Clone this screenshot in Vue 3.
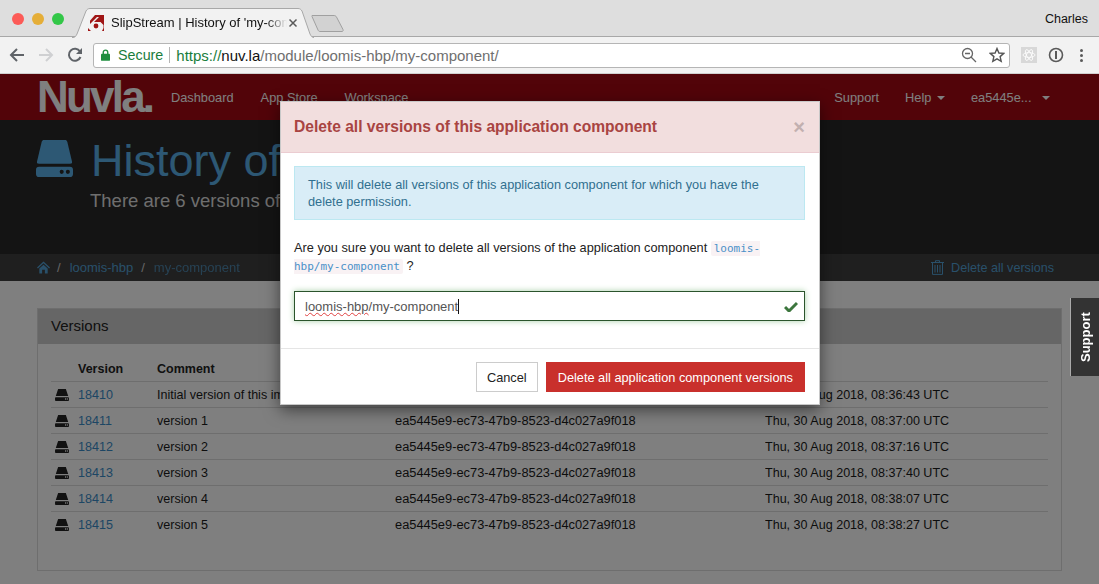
<template>
  <div class="browser">
    <div class="tabstrip">
      <div class="lights">
        <span class="light red"></span>
        <span class="light yellow"></span>
        <span class="light green"></span>
      </div>
      <div class="tab">
        <svg class="tab-shape" width="242" height="30" viewBox="0 0 242 30">
          <path d="M0 29.500 H1 C3 29.500 4 28 5 26 L14 3 C15 1.500 16 .5 18 .5 H226 C228 .5 229 1.500 230 3 L238 26 C239 28 240 29.500 242 29.500" fill="#f2f2f2" stroke="#a8a8a8" />
        </svg>
        <svg class="favicon" width="16" height="16" viewBox="0 0 16 16">
          <path d="M7 0 H16 V16 H14 L15.500 13 V10 L12.500 7 H6 L11 2 H9 L2 9 V0 Z M0 13 L3 16 H0 Z" fill="#a01616" />
          <path d="M0 0 H7 L0 8 Z" fill="#f2f2f2" />
          <circle cx="8" cy="11" r="2.400" fill="#a01616" />
        </svg>
        <span class="tab-title">SlipStream | History of 'my-component'</span>
        <svg class="tab-close" width="10" height="10" viewBox="0 0 10 10">
          <path d="M1.500 1.500 L8.500 8.500 M8.500 1.500 L1.500 8.500" stroke="#5a5a5a" stroke-width="1.500" />
        </svg>
      </div>
      <svg class="new-tab" width="33" height="17" viewBox="0 0 33 17">
        <path d="M1 .5 H23 C24 .5 25 1 25.500 2 L32 14.500 C32.500 15.500 32 16.500 31 16.500 H9 C8 16.500 7.500 16 7 15 L1 1.500 Z" fill="#d2d2d2" stroke="#a0a0a0" />
      </svg>
      <span class="profile">Charles</span>
    </div>

    <div class="toolbar">
      <svg class="nav-btn" width="16" height="16" viewBox="0 0 16 16">
        <path d="M15 8 H2.500 M8 2 L2 8 L8 14" fill="none" stroke="#5f6368" stroke-width="2" />
      </svg>
      <svg class="nav-btn" width="16" height="16" viewBox="0 0 16 16">
        <path d="M1 8 H13.500 M8 2 L14 8 L8 14" fill="none" stroke="#cfd0d2" stroke-width="2" />
      </svg>
      <svg class="nav-btn" width="16" height="16" viewBox="0 0 16 16">
        <path d="M13.500 10 A6 6 0 1 1 13 4.500" fill="none" stroke="#5f6368" stroke-width="2" />
        <path d="M15 1 V7 H9 Z" fill="#5f6368" />
      </svg>
      <div class="omnibox">
        <svg width="9" height="12" viewBox="0 0 10 13">
          <rect y="5" width="10" height="8" rx="1" fill="#1e8e3e" />
          <path d="M2.500 6 V3.500 A2.500 2.500 0 0 1 7.500 3.500 V6" fill="none" stroke="#1e8e3e" stroke-width="1.500" />
        </svg>
        <span class="secure">Secure</span>
        <span class="omni-sep"></span>
        <span class="url"><span class="scheme">https://</span><span class="host">nuv.la</span>/module/loomis-hbp/my-component/</span>
        <span class="omni-icons">
          <svg width="16" height="16" viewBox="0 0 16 16">
            <circle cx="6.500" cy="6.500" r="5" fill="none" stroke="#666" stroke-width="1.300" />
            <path d="M4 6.500 H9 M10 10 L15 15" stroke="#666" stroke-width="1.300" />
          </svg>
          <svg width="16" height="16" viewBox="0 0 16 16">
            <path d="M8 1.500 L9.900 6 L14.800 6.400 L11.100 9.600 L12.200 14.400 L8 11.900 L3.800 14.400 L4.900 9.600 L1.200 6.400 L6.100 6 Z" fill="none" stroke="#555" stroke-width="1.400" />
          </svg>
        </span>
      </div>
      <div class="ext-box">
        <svg width="14" height="14" viewBox="0 0 14 14">
          <g fill="none" stroke="#fff" stroke-width=".8">
            <ellipse cx="7" cy="7" rx="6" ry="2.400" />
            <ellipse cx="7" cy="7" rx="6" ry="2.400" transform="rotate(60 7 7)" />
            <ellipse cx="7" cy="7" rx="6" ry="2.400" transform="rotate(120 7 7)" />
          </g>
        </svg>
      </div>
      <svg class="onepass" width="16" height="16" viewBox="0 0 16 16">
        <circle cx="8" cy="8" r="6.500" fill="none" stroke="#5a5a5a" stroke-width="1.600" />
        <rect x="7" y="4" width="2" height="8" fill="#5a5a5a" />
      </svg>
      <div class="kebab"><span></span><span></span><span></span></div>
    </div>

    <div class="page">
      <nav class="navbar">
        <span class="logo">Nuvla.</span>
        <a class="nav-link">Dashboard</a>
        <a class="nav-link">App Store</a>
        <a class="nav-link">Workspace</a>
        <span class="nav-spacer"></span>
        <a class="nav-link right">Support</a>
        <a class="nav-link right">Help <i class="caret"></i></a>
        <a class="nav-link right user">ea5445e... <i class="caret"></i></a>
      </nav>

      <header class="hero">
        <svg class="hero-icon" width="37" height="37" viewBox="0 0 36 36">
          <path d="M8 0 H28 C29.500 0 30 .5 30.500 2 L35 21 C35.300 23 35 23 33 23 H3 C1 23 .7 23 1 21 L5.500 2 C6 .5 6.500 0 8 0 Z" fill="currentColor" />
          <path fill-rule="evenodd" d="M3 26 H33 C35 26 36 27 36 29 V33 C36 35 35 36 33 36 H3 C1 36 0 35 0 33 V29 C0 27 1 26 3 26 Z M25 29 A2 2 0 1 0 25 33 A2 2 0 1 0 25 29 Z M31 29 A2 2 0 1 0 31 33 A2 2 0 1 0 31 29 Z" fill="currentColor" />
        </svg>
        <div>
          <h1>History of 'my-component'</h1>
          <p>There are 6 versions of this component.</p>
        </div>
      </header>

      <div class="crumbs">
        <svg class="home" width="13" height="13" viewBox="0 0 14 13">
          <path d="M7 0 L14 6.500 L13 7.500 L7 2 L1 7.500 L0 6.500 Z M2.500 7.500 L7 3.500 L11.500 7.500 V13 H8.500 V9 H5.500 V13 H2.500 Z" fill="currentColor" />
        </svg>
        <span class="slash">/</span>
        <a>loomis-hbp</a>
        <span class="slash">/</span>
        <span class="crumb-active">my-component</span>
        <span class="nav-spacer"></span>
        <svg class="trash" width="13" height="15" viewBox="0 0 13 15">
          <path d="M4.500 2 V.7 H8.500 V2 M0 2.500 H13 M1.500 3 V14.400 H11.500 V3 M4 5 V12.500 M6.500 5 V12.500 M9 5 V12.500" fill="none" stroke="currentColor" />
        </svg>
        <a class="delete-all">Delete all versions</a>
      </div>

      <main class="content">
        <section class="panel">
          <div class="panel-head">Versions</div>
          <div class="panel-body">
            <table>
              <thead>
                <tr>
                  <th class="col-icon"></th>
                  <th class="col-version">Version</th>
                  <th class="col-comment">Comment</th>
                  <th class="col-owner">Owner</th>
                  <th>Date</th>
                </tr>
              </thead>
              <tbody>
                <tr v-for="row in versions" :key="row.id">
                  <td>
                    <svg class="row-icon" width="14" height="12" viewBox="0 0 36 31">
                      <path d="M8 0 H28 L34 18 H2 Z" fill="currentColor" />
                      <path fill-rule="evenodd" d="M2 21 H34 C35 21 36 22 36 23 V29 C36 30 35 31 34 31 H2 C1 31 0 30 0 29 V23 C0 22 1 21 2 21 Z M26 24 V28 H29 V24 Z M31 24 V28 H33 V24 Z" fill="currentColor" />
                    </svg>
                  </td>
                  <td><a>{{ row.id }}</a></td>
                  <td>{{ row.comment }}</td>
                  <td class="owner">{{ owner }}</td>
                  <td>{{ row.date }}</td>
                </tr>
              </tbody>
            </table>
          </div>
        </section>
      </main>

      <div class="backdrop"></div>
      <div class="support-tab">Support</div>

      <div class="modal">
        <div class="modal-head">
          <span>Delete all versions of this application component</span>
          <span class="modal-close">×</span>
        </div>
        <div class="modal-body">
          <div class="alert">This will delete all versions of this application component for which you have the delete permission.</div>
          <p class="question">Are you sure you want to delete all versions of the application component <code>loomis-hbp/my-component</code> ?</p>
          <div class="fake-input">
            <span class="typed"><span class="misspelt">loomis-hbp</span>/my-component</span>
            <svg width="14" height="11" viewBox="0 0 14 11">
              <path d="M1 6 L5 10 L13 2" fill="none" stroke="#3c763d" stroke-width="3" />
            </svg>
          </div>
        </div>
        <div class="modal-foot">
          <button class="btn">Cancel</button>
          <button class="btn danger">Delete all application component versions</button>
        </div>
      </div>
    </div>
  </div>
</template>

<script setup>
const owner = 'ea5445e9-ec73-47b9-8523-d4c027a9f018'

const versions = [
  { id: 18410, comment: 'Initial version of this image', date: 'Thu, 30 Aug 2018, 08:36:43 UTC' },
  { id: 18411, comment: 'version 1', date: 'Thu, 30 Aug 2018, 08:37:00 UTC' },
  { id: 18412, comment: 'version 2', date: 'Thu, 30 Aug 2018, 08:37:16 UTC' },
  { id: 18413, comment: 'version 3', date: 'Thu, 30 Aug 2018, 08:37:40 UTC' },
  { id: 18414, comment: 'version 4', date: 'Thu, 30 Aug 2018, 08:38:07 UTC' },
  { id: 18415, comment: 'version 5', date: 'Thu, 30 Aug 2018, 08:38:27 UTC' }
]
</script>

<style>
html, body {
  margin: 0;
  overflow: hidden;
}
</style>

<style scoped>
.browser {
  width: 1099px;
  height: 584px;
  overflow: hidden;
  font-family: "Liberation Sans", Arial, sans-serif;
  font-size: 13px;
  color: #1a1a1a;
  background: #fff;
}

.tabstrip {
  height: 37px;
  box-sizing: border-box;
  background: #dedede;
  border-bottom: 1px solid #a8a8a8;
  display: flex;
  align-items: flex-end;
  position: relative;
}

.lights {
  display: flex;
  gap: 8px;
  padding: 0 0 11px 12px;
}

.light {
  width: 12px;
  height: 12px;
  border-radius: 50%;
}
.light.red { background: #fc5b57; }
.light.yellow { background: #e5ae38; }
.light.green { background: #33c748; }

.tab {
  position: relative;
  width: 242px;
  height: 29px;
  margin-left: 8px;
  margin-bottom: -1px;
  display: flex;
  align-items: center;
  box-sizing: border-box;
  padding: 0 0 0 16px;
  font-size: 13px;
}

.tab-shape {
  position: absolute;
  left: 0;
  top: 0;
}

.favicon, .tab-title, .tab-close {
  position: relative;
}

.tab-title {
  width: 176px;
  margin-left: 7px;
  white-space: nowrap;
  overflow: hidden;
  color: #111;
  -webkit-mask-image: linear-gradient(to right, #000 88%, transparent 100%);
  mask-image: linear-gradient(to right, #000 88%, transparent 100%);
}

.tab-close {
  margin-left: 1px;
}

.new-tab {
  margin: 0 0 4px -3px;
}

.profile {
  position: absolute;
  right: 11px;
  top: 12px;
  font-size: 12.500px;
  color: #111;
}

.toolbar {
  height: 37px;
  box-sizing: border-box;
  background: #f2f2f2;
  border-bottom: 1px solid #d0d0d0;
  display: flex;
  align-items: center;
  padding: 0 0 0 9px;
}

.nav-btn {
  margin-right: 13px;
}

.omnibox {
  width: 917px;
  height: 25px;
  box-sizing: border-box;
  margin-left: -3px;
  background: #fff;
  border: 1px solid #b5b5b5;
  border-radius: 3px;
  display: flex;
  align-items: center;
  padding: 0 4px 0 7px;
  font-size: 15px;
  color: #6f6f6f;
}

.secure {
  color: #1a7d3c;
  font-size: 14.300px;
  margin-left: 8px;
}

.omni-sep {
  width: 1px;
  height: 16px;
  background: #b5b5b5;
  margin: 0 6px;
}

.scheme { color: #1a7d3c; }
.host { color: #111; }

.omni-icons {
  margin-left: auto;
  display: flex;
  gap: 12px;
}

.ext-box {
  width: 16px;
  height: 16px;
  margin-left: 11px;
  background: #d8d8d8;
  display: flex;
  align-items: center;
  justify-content: center;
}

.onepass {
  margin-left: 11px;
}

.kebab {
  margin-left: 16px;
  display: flex;
  flex-direction: column;
  gap: 2px;
}

.kebab span {
  width: 3px;
  height: 3px;
  border-radius: 50%;
  background: #5a5a5a;
}

.page {
  position: relative;
  height: 510px;
  overflow: hidden;
  background: #fff;
}

.navbar {
  height: 46px;
  box-sizing: border-box;
  background: #a40812;
  display: flex;
  align-items: center;
  padding: 0 49px 0 37px;
  color: #fff;
}

.logo {
  width: 134px;
  font-size: 44px;
  font-weight: 700;
  letter-spacing: -2.800px;
  line-height: 46px;
  color: #fff;
}

.nav-link {
  margin-right: 27px;
  font-size: 12.800px;
}

.nav-link.right {
  margin-right: 26px;
}

.nav-link.right:last-child {
  margin-right: 0;
}

.nav-spacer {
  flex: 1;
}

.caret {
  display: inline-block;
  margin-left: 2px;
  vertical-align: middle;
  border-top: 4px solid currentColor;
  border-left: 4px solid transparent;
  border-right: 4px solid transparent;
}

.user .caret {
  margin-left: 7px;
}

.hero {
  height: 134px;
  box-sizing: border-box;
  background: #282828;
  display: flex;
  padding: 20px 0 0 36px;
  color: #5ab0e8;
}

.hero-icon {
  margin: 0 18px 0 0;
}

.hero h1 {
  margin: -3px 0 0;
  font-size: 45px;
  font-weight: 400;
  line-height: 48px;
  white-space: nowrap;
}

.hero p {
  margin: 4px 0 0 -1px;
  font-size: 18.500px;
  line-height: 24px;
  color: #ddd;
}

.crumbs {
  height: 27px;
  box-sizing: border-box;
  background: #3e3e3e;
  display: flex;
  align-items: center;
  padding: 0 45px 0 37px;
  color: #52a0d4;
  font-size: 13px;
}

.slash {
  margin: 0 9px 0 8px;
  color: #ccc;
}

.home {
  margin-right: -1px;
}

.crumb-active {
  opacity: .7;
}

.delete-all {
  font-size: 12.600px;
}

.trash {
  margin-right: 7px;
}

.content {
  padding: 27px 37px 0;
}

.panel {
  height: 263px;
  box-sizing: border-box;
  border: 1px solid #ddd;
}

.panel-head {
  height: 35px;
  box-sizing: border-box;
  padding: 0 13px;
  background: #ccc;
  font-size: 15px;
  line-height: 33px;
  color: #222;
}

.panel-body {
  padding: 12px 13px 0;
}

table {
  width: 997px;
  border-collapse: collapse;
  table-layout: fixed;
  font-size: 12.550px;
}

th {
  height: 25px;
  padding: 0;
  font-size: 12.500px;
  text-align: left;
  font-weight: 700;
  color: #222;
  border-bottom: 1px solid #ddd;
}

td {
  height: 25px;
  padding: 0;
  border-bottom: 1px solid #ddd;
  white-space: nowrap;
  overflow: hidden;
}

td.owner {
  font-size: 12.850px;
}

tbody tr:last-child td {
  border-bottom: 0;
}

td a {
  color: #3a8cc8;
}

.col-icon { width: 27px; }
.col-version { width: 79px; }
.col-comment { width: 238px; }
.col-owner { width: 370px; }

.row-icon {
  display: block;
  margin-left: 4px;
  color: #222;
}

.backdrop {
  position: absolute;
  inset: 0;
  background: rgba(0, 0, 0, .5);
}

.support-tab {
  position: absolute;
  right: 0;
  top: 224px;
  width: 29px;
  height: 78px;
  box-sizing: border-box;
  background: #333;
  border-right: 1px solid #aaa;
  color: #fff;
  font-size: 13px;
  font-weight: 700;
  display: flex;
  align-items: center;
  justify-content: center;
  writing-mode: vertical-rl;
  transform: rotate(180deg);
}

.modal {
  position: absolute;
  left: 280px;
  top: 27px;
  width: 540px;
  height: 304px;
  box-sizing: border-box;
  background: #fff;
  border: 1px solid #c8c8c8;
  box-shadow: 0 5px 15px rgba(0, 0, 0, .5);
  display: flex;
  flex-direction: column;
  font-size: 12.750px;
}

.modal-head {
  height: 51px;
  box-sizing: border-box;
  background: #f2dede;
  border-bottom: 1px solid #ebccd1;
  color: #a94442;
  font-size: 15.600px;
  font-weight: 700;
  display: flex;
  align-items: center;
  justify-content: space-between;
  padding: 0 14px 0 13px;
}

.modal-close {
  font-size: 20px;
  color: #c2b0b0;
}

.modal-body {
  flex: 1;
  padding: 13px 14px 0 13px;
  border-bottom: 1px solid #e5e5e5;
}

.alert {
  box-sizing: border-box;
  height: 54px;
  padding: 9px 13px;
  background: #d9edf7;
  border: 1px solid #bce8f1;
  color: #31708f;
  line-height: 17px;
}

.question {
  margin: 19px 0 0;
  line-height: 18px;
  color: #222;
}

code {
  font-family: "DejaVu Sans Mono", monospace;
  font-size: 11px;
  line-height: 1;
  color: #4a90c8;
  background: #f9f2f4;
  padding: 1px 3px;
  border-radius: 2px;
}

.fake-input {
  height: 30px;
  box-sizing: border-box;
  margin-top: 16px;
  padding: 0 6px 0 10px;
  border: 1px solid #2b542c;
  box-shadow: 0 0 6px #a8d0a8;
  display: flex;
  align-items: center;
  justify-content: space-between;
  color: #555;
  font-size: 13px;
}

.typed {
  border-right: 1px solid #111;
}

.misspelt {
  text-decoration: underline wavy #e04040 1px;
}

.modal-foot {
  height: 55px;
  box-sizing: border-box;
  display: flex;
  justify-content: flex-end;
  align-items: flex-start;
  gap: 8px;
  padding: 13px 14px 0 0;
}

.btn {
  height: 30px;
  box-sizing: border-box;
  padding: 0 10px;
  font-family: inherit;
  font-size: 12.750px;
  color: #222;
  background: #fff;
  border: 1px solid #ccc;
}

.btn.danger {
  padding: 0 11px;
  color: #fff;
  background: #c9302c;
  border-color: #c9302c;
}
</style>
